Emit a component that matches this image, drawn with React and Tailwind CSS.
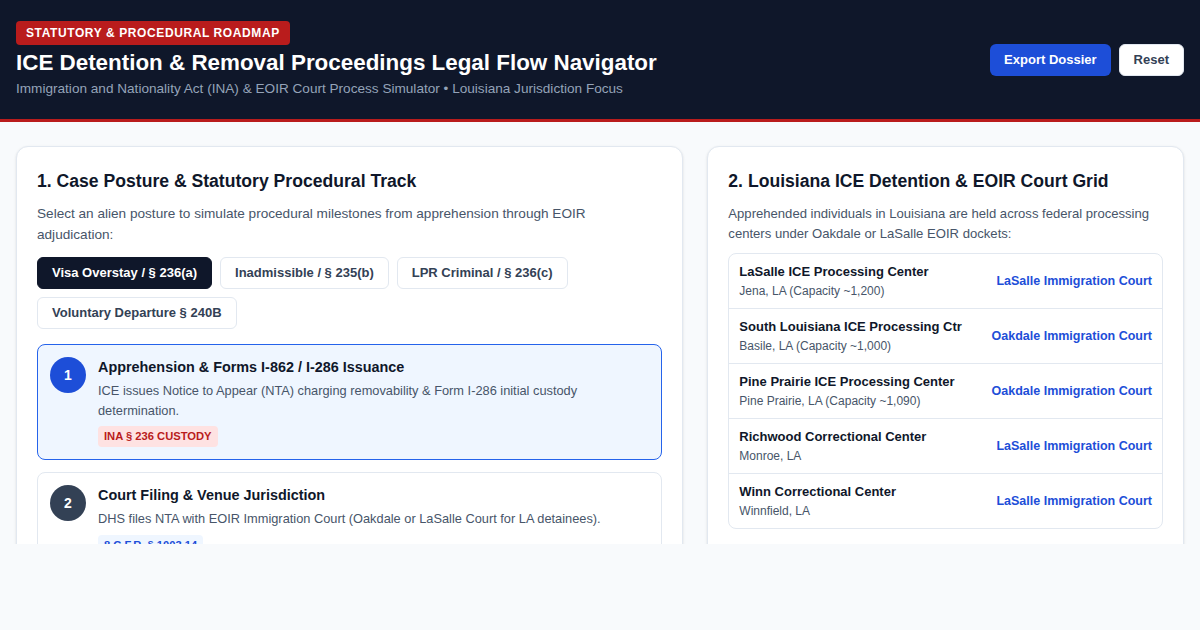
import React from "react";

const postures = [
  { label: "Visa Overstay / § 236(a)", active: true },
  { label: "Inadmissible / § 235(b)" },
  { label: "LPR Criminal / § 236(c)" },
  { label: "Voluntary Departure § 240B" },
];

const steps = [
  {
    n: 1,
    title: "Apprehension & Forms I-862 / I-286 Issuance",
    desc: "ICE issues Notice to Appear (NTA) charging removability & Form I-286 initial custody determination.",
    tag: "INA § 236 CUSTODY",
    active: true,
  },
  {
    n: 2,
    title: "Court Filing & Venue Jurisdiction",
    desc: "DHS files NTA with EOIR Immigration Court (Oakdale or LaSalle Court for LA detainees).",
    tag: "8 C.F.R. § 1003.14",
  },
  {
    n: 3,
    title: "Master Calendar Hearing",
    desc: "Pleadings taken before the Immigration Judge.",
    tag: "INA § 240",
  },
];

const centers = [
  { name: "LaSalle ICE Processing Center", loc: "Jena, LA (Capacity ~1,200)", court: "LaSalle Immigration Court" },
  { name: "South Louisiana ICE Processing Ctr", loc: "Basile, LA (Capacity ~1,000)", court: "Oakdale Immigration Court" },
  { name: "Pine Prairie ICE Processing Center", loc: "Pine Prairie, LA (Capacity ~1,090)", court: "Oakdale Immigration Court" },
  { name: "Richwood Correctional Center", loc: "Monroe, LA", court: "LaSalle Immigration Court" },
  { name: "Winn Correctional Center", loc: "Winnfield, LA", court: "LaSalle Immigration Court" },
];

export default function App() {
  return (
    <div className="min-h-[630px] bg-[#f8fafc] font-['Liberation_Sans',Arial,sans-serif]">
      <header className="flex items-center justify-between bg-[#0f172a] px-4 py-5 border-b-[3px] border-[#b91c1c]">
        <div>
          <span className="inline-block rounded bg-[#b91c1c] px-2.5 py-1 text-xs font-bold uppercase leading-4 tracking-[0.05em] text-white">
            Statutory &amp; Procedural Roadmap
          </span>
          <h1 className="mt-0.5 text-[22.4px] font-bold leading-8 text-white">
            ICE Detention &amp; Removal Proceedings Legal Flow Navigator
          </h1>
          <p className="text-[13.6px] leading-5 text-[#94a3b8]">
            Immigration and Nationality Act (INA) &amp; EOIR Court Process Simulator • Louisiana Jurisdiction Focus
          </p>
        </div>
        <div className="flex items-center gap-2">
          <button className="h-8 rounded-md bg-[#1d4ed8] px-3.5 text-[13px] font-bold text-white">
            Export Dossier
          </button>
          <button className="h-8 rounded-md border border-[#e2e8f0] bg-white px-3.5 text-[13px] font-bold text-[#334155]">
            Reset
          </button>
        </div>
      </header>

      <main className="h-[422px] overflow-hidden px-4 pt-6">
        <div className="grid grid-cols-[7fr_5fr] gap-6">
          <section className="rounded-xl border border-[#e2e8f0] bg-white p-5 shadow-sm">
            <h2 className="text-[17.6px] font-bold leading-7 text-[#0f172a]">
              1. Case Posture &amp; Statutory Procedural Track
            </h2>
            <p className="mt-2 text-[13.6px] leading-[21px] text-[#475569]">
              Select an alien posture to simulate procedural milestones from apprehension through EOIR adjudication:
            </p>
            <div className="mt-3 flex flex-wrap gap-2">
              {postures.map((p) => (
                <button
                  key={p.label}
                  className={
                    p.active
                      ? "h-8 rounded-md border border-[#0f172a] bg-[#0f172a] px-3.5 text-[13px] font-bold text-white"
                      : "h-8 rounded-md border border-[#e2e8f0] bg-white px-3.5 text-[13px] font-bold text-[#334155]"
                  }
                >
                  {p.label}
                </button>
              ))}
            </div>
            <div className="mt-[15px] flex flex-col gap-3">
              {steps.map((s) => (
                <div
                  key={s.n}
                  className={
                    s.active
                      ? "flex gap-3 rounded-lg border border-[#2563eb] bg-[#eff6ff] p-3"
                      : "flex gap-3 rounded-lg border border-[#e2e8f0] bg-white p-3"
                  }
                >
                  <div
                    className={
                      s.active
                        ? "flex h-9 w-9 shrink-0 items-center justify-center rounded-full bg-[#1d4ed8] text-sm font-bold text-white"
                        : "flex h-9 w-9 shrink-0 items-center justify-center rounded-full bg-[#334155] text-sm font-bold text-white"
                    }
                  >
                    {s.n}
                  </div>
                  <div className="min-w-0 flex-1">
                    <h3 className="text-[14.4px] font-bold leading-5 text-[#0f172a]">{s.title}</h3>
                    <p className="mt-1 text-[12.8px] leading-[19.5px] text-[#475569]">{s.desc}</p>
                    <span
                      className={
                        s.active
                          ? "mt-1.5 inline-block rounded bg-[#fee2e2] px-1.5 py-0.5 text-[11.2px] font-bold uppercase leading-[17px] text-[#b91c1c]"
                          : "mt-1.5 inline-block rounded bg-[#eff6ff] px-1.5 py-0.5 text-[11.2px] font-bold uppercase leading-[17px] text-[#1d4ed8]"
                      }
                    >
                      {s.tag}
                    </span>
                  </div>
                </div>
              ))}
            </div>
          </section>

          <section className="rounded-xl border border-[#e2e8f0] bg-white p-5 shadow-sm">
            <h2 className="text-[17.6px] font-bold leading-7 text-[#0f172a]">
              2. Louisiana ICE Detention &amp; EOIR Court Grid
            </h2>
            <p className="mt-[9px] text-[13.1px] leading-5 text-[#475569]">
              Apprehended individuals in Louisiana are held across federal processing centers under Oakdale or LaSalle EOIR dockets:
            </p>
            <div className="mt-[9px] divide-y divide-[#e2e8f0] rounded-lg border border-[#e2e8f0]">
              {centers.map((c) => (
                <div key={c.name} className="flex items-center justify-between gap-3 px-2.5 py-[9px]">
                  <div className="min-w-0">
                    <div className="text-[13px] font-bold leading-[18px] text-[#0f172a]">{c.name}</div>
                    <div className="mt-0.5 text-xs leading-4 text-[#475569]">{c.loc}</div>
                  </div>
                  <div className="shrink-0 text-right text-[12.5px] font-bold text-[#1d4ed8]">{c.court}</div>
                </div>
              ))}
            </div>
          </section>
        </div>
      </main>
    </div>
  );
}
